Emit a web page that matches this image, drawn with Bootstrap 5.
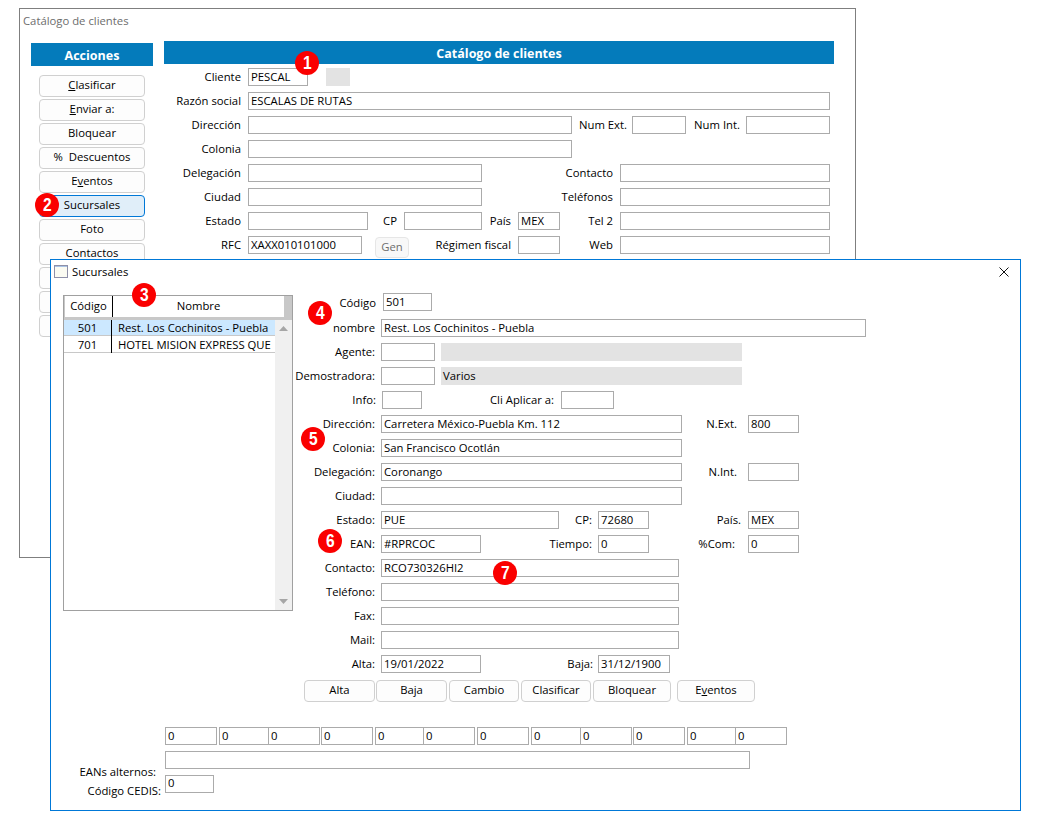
<!DOCTYPE html>
<html lang="es">
<head>
<meta charset="utf-8">
<title>Catálogo de clientes</title>
<link rel="stylesheet" href="https://cdn.jsdelivr.net/npm/bootstrap@5.3.0/dist/css/bootstrap.min.css">
<style>
html,body{margin:0;background:#fff}
body{font-family:"Open Sans","Noto Sans",sans-serif;font-size:11.3px;color:#000}
.desk{position:relative;width:1042px;height:822px;overflow:hidden}
.win{position:absolute;background:#fff}
.win-back{left:19px;top:8px;width:837px;height:550px;border:1px solid #7f7f7f}
.win-front{left:50px;top:259px;width:971px;height:552px;border:1px solid #0078d7}
.ttl-back{height:32px;padding:5px 0 0 3px;color:#6d6d6d;line-height:14px}
.ttl-front{height:33px;padding:5px 11px 0 3px;line-height:14px}
.ico-x{margin-top:2px}
.side{width:122px;margin:2px 11px 0 11px;flex:none}
.main{width:670px;flex:none}
.hdr{background:#047bbb;color:#fff;font-weight:700;font-size:12.5px;height:23px;line-height:25px;text-align:center}
.btns{margin:9px 0 0 8px;width:106px;gap:2px}
.bx{height:22px;padding:0 0 2px;font-size:11.3px;line-height:18px;background:#fdfdfd;border:1px solid #d0d0d0;border-radius:4px;color:#000;flex:none}
.bx-on{background:#e0eef9;border-color:#0078d7}
.gen{width:34px;height:21px;color:#6d6d6d;margin:1px 0 0 13px;background:#f8f8f8;border-color:#e6e6e6;line-height:17px}
.rows{margin-top:4px;gap:6px}
.rw{height:18px;flex:none}
.lb{flex:none;text-align:right;line-height:18px;margin-right:7px;white-space:nowrap;margin-bottom:0}
.lb6{margin-right:6px}.lb5{margin-right:5px}.lb11{margin-right:11px}.lb13{margin-right:13px}
.lb-low{line-height:20px}
.fx{flex:none;height:18px;min-height:0;padding:0 2px 2px;font-size:11.3px;line-height:14px;border:1px solid #ababab;border-radius:0;background:#fff;color:#000}
.fill{flex:none;height:18px;background:#e3e3e3;padding-left:2px;line-height:18px}
.gap6{margin-left:6px}
.lst{width:230px;height:316px;margin:2px 0 0 12px;border:1px solid #a0a0a0;flex:none;background:#fff}
.lst-h{height:24px;background:#c8c8c8;padding:0 8px 3px 1px}
.lst-h div{background:#fff;text-align:center;line-height:20px;height:21px}
.c-cod{width:48px;flex:none;border-right:1px solid #000}
.c-nom{flex:1;min-width:0}
.lst-b{height:290px}
.lst-r{width:211px;flex:none}
.rowi{height:16px;line-height:16px;border-bottom:1px solid #c8c8c8}
.rowi .c-cod{text-align:center;height:16px}
.rowi .c-nom{padding:0 2px 0 6px;overflow:hidden;white-space:nowrap;height:15px}
.rowi-on{background:#cce8ff}
.rowi-b{height:17px;line-height:18px}
.rowi-b .c-cod{height:17px}
.rowi-b .c-nom{height:16px}
.sbar{flex:1;background:#f0f0f0;padding:6px 0}
.frm{width:660px;flex:none;gap:6px}
.rw-first{margin-bottom:2px}
.brow{margin:1px 0 0 11px}
.brow .bx{width:71px}
.m1{margin-left:1px}.m2{margin-left:2px}.m6{margin-left:6px}
.foot{margin:25px 0 0 0;gap:6px}
.sp114{width:114px;flex:none}
.lap{margin-left:-1px}
.lb-e{margin-top:13px;line-height:16px;width:105px;padding:0;margin-right:9px}
.lb-c{margin-top:8px;line-height:16px;width:110px;margin-right:4px}
.top0{padding-bottom:4px;line-height:12px}
.pin{position:absolute;width:24px;height:24px;border-radius:50%;background:#fa0000;color:#fff;font:700 19px/24px "Liberation Sans",sans-serif;text-align:center}
.pin span{display:inline-block;transform:scaleX(.82)}
.p1{left:295px;top:51px}.p2{left:35px;top:193px}.p3{left:132px;top:283px}.p4{left:308px;top:301px}.p5{left:301px;top:427px}.p6{left:318px;top:529px}.p7{left:493px;top:561px}
.w29{width:29px}.w33{width:33px}.w40{width:40px}.w42{width:42px}.w49{width:49px}.w50{width:50px}.w51{width:51px}.w52{width:52px}.w53{width:53px}.w54{width:54px}.w55{width:55px}.w60{width:60px}.w72{width:72px}.w77{width:77px}.w78{width:78px}.w82{width:82px}.w83{width:83px}.w84{width:84px}.w86{width:86px}.w92{width:92px}.w100{width:100px}.w102{width:102px}.w111{width:111px}.w112{width:112px}.w114{width:114px}.w120{width:120px}.w131{width:131px}.w132{width:132px}.w178{width:178px}.w210{width:210px}.w234{width:234px}.w298{width:298px}.w301{width:301px}.w324{width:324px}.w485{width:485px}.w582{width:582px}.w585{width:585px}.wb70{width:70px!important}.wb78{width:78px!important}
.box24{width:24px;margin-left:18px}
</style>
</head>
<body>
<div class="desk">

<section class="win win-back">
  <div class="ttl-back">Catálogo de clientes</div>
  <div class="d-flex">
    <div class="side">
      <div class="hdr">Acciones</div>
      <div class="btns d-flex flex-column">
        <button class="btn bx"><u>C</u>lasificar</button>
        <button class="btn bx"><u>E</u>nviar a:</button>
        <button class="btn bx">Bloquear</button>
        <button class="btn bx">%&nbsp; Descuentos</button>
        <button class="btn bx">E<u>v</u>entos</button>
        <button class="btn bx bx-on">Sucursales</button>
        <button class="btn bx">Foto</button>
        <button class="btn bx">Contactos</button>
        <button class="btn bx">&nbsp;</button>
        <button class="btn bx">&nbsp;</button>
        <button class="btn bx">&nbsp;</button>
      </div>
    </div>
    <div class="main">
      <div class="hdr">Catálogo de clientes</div>
      <div class="rows d-flex flex-column">
        <div class="rw d-flex"><label class="lb w77">Cliente</label><input class="form-control fx w60" value="PESCAL"><div class="fill box24"></div></div>
        <div class="rw d-flex"><label class="lb w77">Razón social</label><input class="form-control fx w582" value="ESCALAS DE RUTAS"></div>
        <div class="rw d-flex"><label class="lb w77">Dirección</label><input class="form-control fx w324"><label class="lb lb5 w55">Num Ext.</label><input class="form-control fx w54"><label class="lb lb6 w54">Num Int.</label><input class="form-control fx w84"></div>
        <div class="rw d-flex"><label class="lb w77">Colonia</label><input class="form-control fx w324"></div>
        <div class="rw d-flex"><label class="lb w77">Delegación</label><input class="form-control fx w234"><label class="lb w131">Contacto</label><input class="form-control fx w210"></div>
        <div class="rw d-flex"><label class="lb w77">Ciudad</label><input class="form-control fx w234"><label class="lb w131">Teléfonos</label><input class="form-control fx w210"></div>
        <div class="rw d-flex"><label class="lb w77">Estado</label><input class="form-control fx w120"><label class="lb w29">CP</label><input class="form-control fx w78"><label class="lb w29">País</label><input class="form-control fx w42" value="MEX"><label class="lb w53">Tel 2</label><input class="form-control fx w210"></div>
        <div class="rw d-flex"><label class="lb w77">RFC</label><input class="form-control fx w114" value="XAXX010101000"><button class="btn bx gen">Gen</button><label class="lb w102">Régimen fiscal</label><input class="form-control fx w42"><label class="lb w53">Web</label><input class="form-control fx w210"></div>
      </div>
    </div>
  </div>
</section>

<section class="win win-front">
  <div class="ttl-front d-flex justify-content-between">
    <div class="d-flex gap-1">
      <svg width="14" height="13" viewBox="0 0 14 13" aria-hidden="true"><rect x=".5" y=".5" width="13" height="12" fill="#fbfbf2" stroke="#8f90a8"/><line x1="1" y1="1.500" x2="13" y2="1.500" stroke="#a9c3e6"/></svg>
      <span>Sucursales</span>
    </div>
    <svg class="ico-x" width="10" height="10" viewBox="0 0 10 10" aria-hidden="true"><path d="M.5.5l9 9M9.500.5l-9 9" stroke="#111" stroke-width="1" fill="none"/></svg>
  </div>
  <div class="d-flex">
    <div class="lst">
      <div class="lst-h d-flex"><div class="c-cod">Código</div><div class="c-nom">Nombre</div></div>
      <div class="lst-b d-flex">
        <div class="lst-r">
          <div class="rowi rowi-on d-flex"><div class="c-cod">501</div><div class="c-nom">Rest. Los Cochinitos - Puebla</div></div>
          <div class="rowi rowi-b d-flex"><div class="c-cod">701</div><div class="c-nom">HOTEL MISION EXPRESS QUE</div></div>
        </div>
        <div class="sbar d-flex flex-column justify-content-between align-items-center">
          <svg width="9" height="5" viewBox="0 0 9 5" aria-hidden="true"><path d="M0 5L4.500 0 9 5z" fill="#a6a6a6"/></svg>
          <svg width="9" height="5" viewBox="0 0 9 5" aria-hidden="true"><path d="M0 0L4.500 5 9 0z" fill="#a6a6a6"/></svg>
        </div>
      </div>
    </div>
    <div class="frm d-flex flex-column">
      <div class="rw rw-first d-flex"><label class="lb lb-low w83">Código</label><input class="form-control fx w49" value="501"></div>
      <div class="rw d-flex"><label class="lb lb6 w82">nombre</label><input class="form-control fx w485" value="Rest. Los Cochinitos - Puebla"></div>
      <div class="rw d-flex"><label class="lb lb6 w82">Agente:</label><input class="form-control fx w54"><div class="fill w301 gap6"></div></div>
      <div class="rw d-flex"><label class="lb lb6 w82">Demostradora:</label><input class="form-control fx w54"><div class="fill w301 gap6">Varios</div></div>
      <div class="rw d-flex"><label class="lb lb6 w83">Info:</label><input class="form-control fx w40"><label class="lb w132">Cli Aplicar a:</label><input class="form-control fx w53"></div>
      <div class="rw d-flex"><label class="lb lb6 w82">Dirección:</label><input class="form-control fx w301" value="Carretera México-Puebla Km. 112"><label class="lb lb11 w55">N.Ext.</label><input class="form-control fx w51" value="800"></div>
      <div class="rw d-flex"><label class="lb lb6 w82">Colonia:</label><input class="form-control fx w301" value="San Francisco Ocotlán"></div>
      <div class="rw d-flex"><label class="lb lb6 w82">Delegación:</label><input class="form-control fx w301" value="Coronango"><label class="lb lb11 w55">N.Int.</label><input class="form-control fx w51"></div>
      <div class="rw d-flex"><label class="lb lb6 w82">Ciudad:</label><input class="form-control fx w301"></div>
      <div class="rw d-flex"><label class="lb lb6 w82">Estado:</label><input class="form-control fx w178" value="PUE"><label class="lb lb6 w33">CP:</label><input class="form-control fx w51" value="72680"><label class="lb w92">País.</label><input class="form-control fx w51" value="MEX"></div>
      <div class="rw d-flex"><label class="lb lb6 w82">EAN:</label><input class="form-control fx w100" value="#RPRCOC"><label class="lb lb6 w111">Tiempo:</label><input class="form-control fx w51" value="0"><label class="lb lb13 w86">%Com:</label><input class="form-control fx w51" value="0"></div>
      <div class="rw d-flex"><label class="lb lb6 w82">Contacto:</label><input class="form-control fx w298" value="RCO730326HI2"></div>
      <div class="rw d-flex"><label class="lb lb6 w82">Teléfono:</label><input class="form-control fx w298"></div>
      <div class="rw d-flex"><label class="lb lb6 w82">Fax:</label><input class="form-control fx w298"></div>
      <div class="rw d-flex"><label class="lb lb6 w82">Mail:</label><input class="form-control fx w298"></div>
      <div class="rw d-flex"><label class="lb lb6 w82">Alta:</label><input class="form-control fx w100" value="19/01/2022"><label class="lb lb5 w112">Baja:</label><input class="form-control fx w72" value="31/12/1900"></div>
      <div class="brow d-flex">
        <button class="btn bx">Alta</button>
        <button class="btn bx m1">Baja</button>
        <button class="btn bx wb70 m2">Cambio</button>
        <button class="btn bx wb70 m2">Clasificar</button>
        <button class="btn bx wb78 m2">Bloquear</button>
        <button class="btn bx wb78 m6">E<u>v</u>entos</button>
      </div>
    </div>
  </div>
  <div class="foot d-flex flex-column">
    <div class="rw d-flex"><div class="sp114"></div>
      <input class="form-control fx w52" value="0">
      <input class="form-control fx w50 m2" value="0"><input class="form-control fx w52 lap" value="0">
      <input class="form-control fx w52 m1" value="0">
      <input class="form-control fx w49 m2" value="0"><input class="form-control fx w52 lap" value="0">
      <input class="form-control fx w52 m2" value="0">
      <input class="form-control fx w50 m2" value="0"><input class="form-control fx w52 lap" value="0">
      <input class="form-control fx w52 m1" value="0">
      <input class="form-control fx w49 m2" value="0"><input class="form-control fx w52 lap" value="0">
    </div>
    <div class="rw d-flex"><label class="lb lb-e">EANs alternos:</label><input class="form-control fx w585"></div>
    <div class="rw d-flex"><label class="lb lb-c">Código CEDIS:</label><input class="form-control fx w49 top0" value="0"></div>
  </div>
</section>

<div class="pin p1"><span>1</span></div>
<div class="pin p2"><span>2</span></div>
<div class="pin p3"><span>3</span></div>
<div class="pin p4"><span>4</span></div>
<div class="pin p5"><span>5</span></div>
<div class="pin p6"><span>6</span></div>
<div class="pin p7"><span>7</span></div>
</div>
<script src="https://cdn.jsdelivr.net/npm/bootstrap@5.3.0/dist/js/bootstrap.bundle.min.js"></script>
</body>
</html>
